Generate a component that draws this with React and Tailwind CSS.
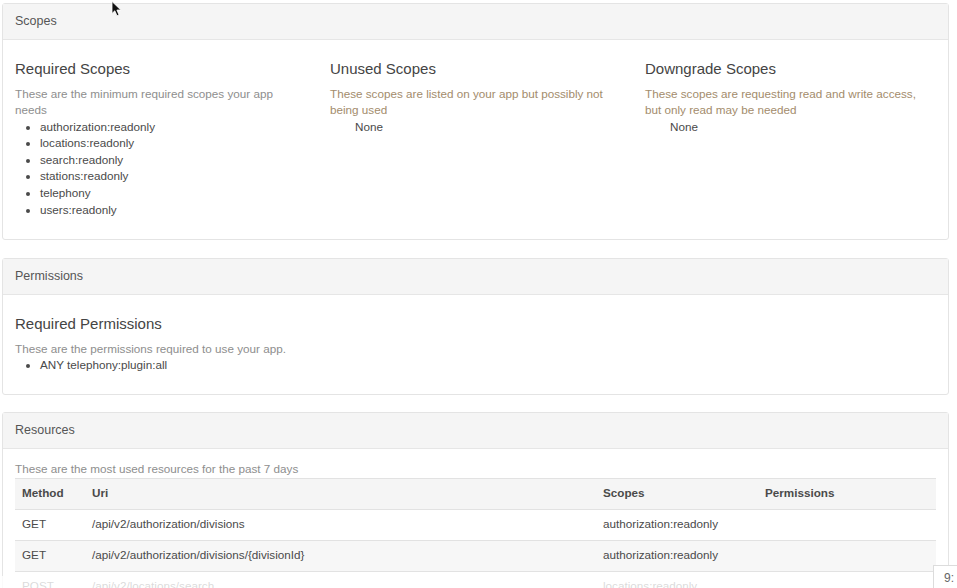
const requiredScopes = [
  'authorization:readonly',
  'locations:readonly',
  'search:readonly',
  'stations:readonly',
  'telephony',
  'users:readonly',
]

const resources = [
  { method: 'GET', uri: '/api/v2/authorization/divisions', scopes: 'authorization:readonly', permissions: '' },
  { method: 'GET', uri: '/api/v2/authorization/divisions/{divisionId}', scopes: 'authorization:readonly', permissions: '' },
  { method: 'POST', uri: '/api/v2/locations/search', scopes: 'locations:readonly', permissions: '' },
]

const Panel = ({ title, children, bodyClass, className = 'mb-[17px]' }) => (
  <div className={`w-[947px] border border-[#e4e4e4] rounded-[3px] bg-white ${className}`}>
    <div className="h-[36px] flex items-center px-[12px] bg-[#f5f5f5] border-b border-[#e6e6e6] text-[12.5px] text-[#555]">
      {title}
    </div>
    <div className={bodyClass}>{children}</div>
  </div>
)

const Heading = ({ children }) => (
  <h4 className="text-[15px] leading-[16.5px] text-[#444] mb-[8px]">{children}</h4>
)

const App = () => {
  return (
    <div className="relative w-[957px] h-[588px] overflow-hidden bg-white pt-[3px] pl-[2px] font-['Liberation_Sans',Arial,sans-serif] text-[11.7px] leading-[16.6px] text-[#4a4a4a]">
      {/* Scopes */}
      <Panel title="Scopes" className="mb-[18px]" bodyClass="px-[12px] pt-[21px] pb-[21px]">
        <div className="grid grid-cols-[315px_315px_315px]">
          <div>
            <Heading>Required Scopes</Heading>
            <p className="text-[#8e8e8e] pr-[37px]">These are the minimum required scopes your app needs</p>
            <ul className="list-disc pl-[25px]">
              {requiredScopes.map((s) => (
                <li key={s}>{s}</li>
              ))}
            </ul>
          </div>
          <div>
            <Heading>Unused Scopes</Heading>
            <p className="text-[#a38c6c] pr-[37px]">These scopes are listed on your app but possibly not being used</p>
            <ul className="list-none pl-[25px]">
              <li>None</li>
            </ul>
          </div>
          <div>
            <Heading>Downgrade Scopes</Heading>
            <p className="text-[#a38c6c] pr-[37px]">These scopes are requesting read and write access, but only read may be needed</p>
            <ul className="list-none pl-[25px]">
              <li>None</li>
            </ul>
          </div>
        </div>
      </Panel>

      {/* Permissions */}
      <Panel title="Permissions" bodyClass="px-[12px] pt-[21px] pb-[20px]">
        <Heading>Required Permissions</Heading>
        <p className="text-[#8e8e8e]">These are the permissions required to use your app.</p>
        <ul className="list-disc pl-[25px]">
          <li>ANY telephony:plugin:all</li>
        </ul>
      </Panel>

      {/* Resources */}
      <Panel title="Resources" bodyClass="px-[12px] pt-[12px] pb-[20px]">
        <p className="text-[#8e8e8e]">These are the most used resources for the past 7 days</p>
        <table className="w-[921px] border-collapse table-fixed">
          <colgroup>
            <col className="w-[70px]" />
            <col className="w-[511px]" />
            <col className="w-[162px]" />
            <col />
          </colgroup>
          <tbody>
            <tr className="bg-[#f5f5f5] border-t border-[#e2e2e2] h-[31px]">
              <th className="text-left font-bold px-[7px]">Method</th>
              <th className="text-left font-bold px-[7px]">Uri</th>
              <th className="text-left font-bold px-[7px]">Scopes</th>
              <th className="text-left font-bold px-[7px]">Permissions</th>
            </tr>
            {resources.map((r, i) => (
              <tr key={r.uri} className={`border-t border-[#e2e2e2] h-[31px] ${i % 2 === 1 ? 'bg-[#f7f7f7]' : 'bg-white'}`}>
                <td className="px-[7px]">{r.method}</td>
                <td className="px-[7px]">{r.uri}</td>
                <td className="px-[7px]">{r.scopes}</td>
                <td className="px-[7px]">{r.permissions}</td>
              </tr>
            ))}
          </tbody>
        </table>
      </Panel>

      {/* bottom fade */}
      <div className="absolute left-0 top-[576px] w-[933px] h-[12px] bg-white/80" />

      {/* clock badge */}
      <div className="absolute left-[933px] top-[565px] w-[30px] h-[26px] border border-[#dcdcdc] bg-white pl-[10px] pt-[4px] text-[12px] text-[#666]">
        9:
      </div>

      {/* cursor */}
      <svg className="absolute left-[111px] top-[1px]" width="11" height="16" viewBox="0 0 11 16">
        <path d="M1 0.5 L1 12.5 L3.8 9.8 L6 14.8 L8 13.9 L5.9 9 L9.8 9 Z" fill="#111" stroke="#fff" strokeWidth="0.8" />
      </svg>
    </div>
  )
}

export default App
